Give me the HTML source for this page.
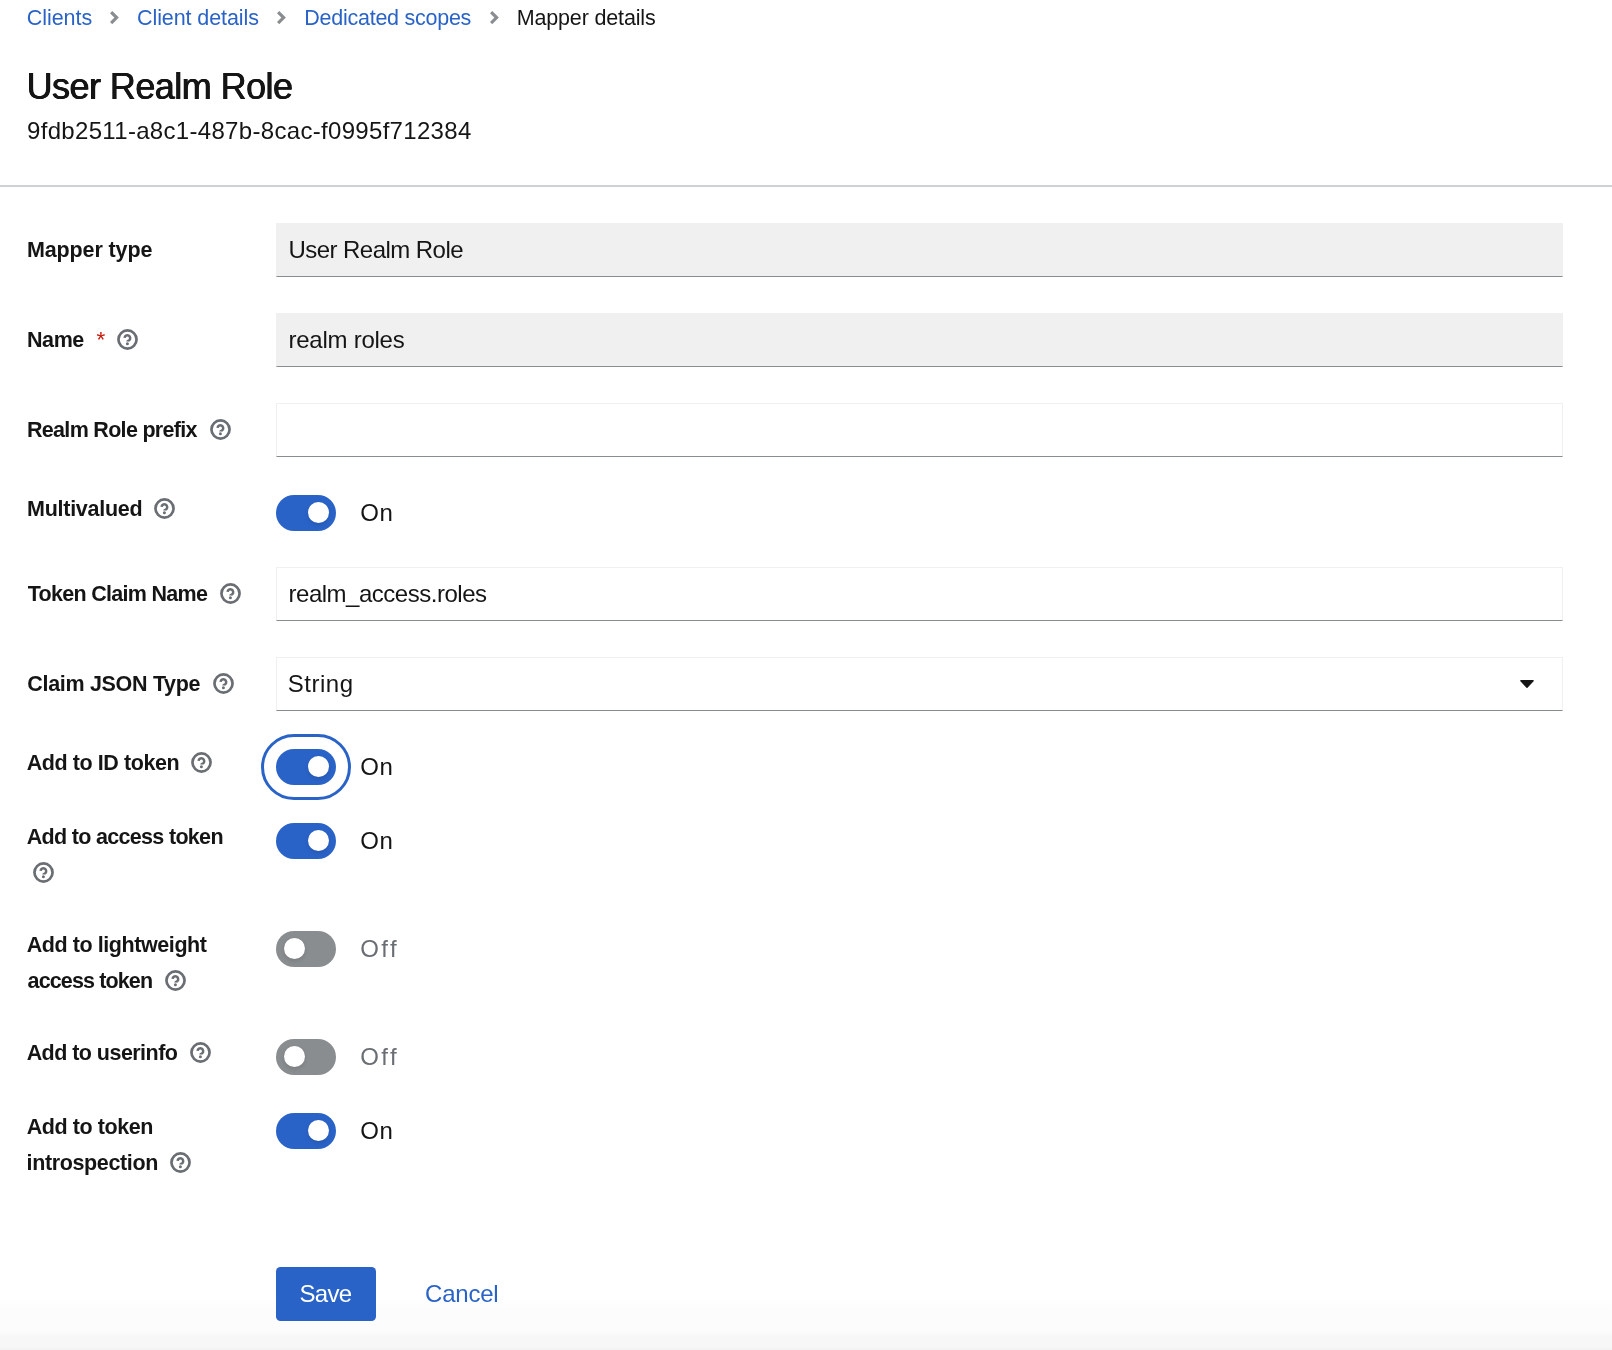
<!DOCTYPE html>
<html lang="en">
<head>
<meta charset="utf-8">
<title>Mapper details</title>
<style>
*{box-sizing:border-box;margin:0;padding:0}
html,body{width:1612px;height:1350px;overflow:hidden;background:#fff}
#page{position:absolute;left:0;top:0;width:1612px;height:1350px;will-change:transform}
body{position:relative;font-family:"Liberation Sans",Arial,sans-serif;color:#151515}
.t{position:absolute;white-space:nowrap;line-height:1;display:block;font-weight:400}
.bc{color:#2a63c7}
.bc.cur{color:#151515}
.chev{position:absolute;top:10.8px;width:9px;height:13.2px}
.h1{text-shadow:0.45px 0 0 #151515,-0.45px 0 0 #151515}
.divider{position:absolute;left:0;top:184.5px;width:1612px;height:2px;background:#d0d1d4}
.lbl{font-weight:700}
.help{position:absolute;width:21px;height:21px}
.req{color:#c9190b}
.inp{position:absolute;left:276px;width:1287px;height:54px;border:1.5px solid #f0f0f0;border-bottom:1.5px solid #8a8d90;background:#fff}
.inp.ro{background:#f0f0f0}
.sw{position:absolute;left:276px;width:60px;height:36px;border-radius:18px;background:#2a63c7}
.sw i{position:absolute;top:7px;left:31.9px;width:21.4px;height:21.4px;border-radius:50%;background:#fff;box-shadow:0 2px 4px rgba(3,3,3,.12)}
.sw.off{background:#8a8d90}
.sw.off i{left:7.7px}
.sw.focus{outline:3px solid #2a63c7;outline-offset:12px}
.swl.off{color:#6a6e73}
.btn{position:absolute;left:276px;top:1267px;width:100px;height:54px;border-radius:4.5px;background:#2a63c7}
.btnt{color:#fff}
.cancel{color:#2a63c7}
.fade{position:absolute;left:0;top:1298px;width:1612px;height:52px;background:linear-gradient(to bottom,#fff 0,#fcfcfc 13px,#fcfcfc 32px,#f7f7f7 39px,#f7f7f7 48px,#f3f3f3 52px)}
.caret{position:absolute;left:1519px;top:679px;width:16px;height:10px}
</style>
</head>
<body>
<div id="page">
<div class="fade"></div>
<nav>
<a id="bc1" class="t bc" style="left:26.85px;top:8.00px;font-size:21.5px;letter-spacing:-0.067px">Clients</a>
<svg class="chev" style="left:109.8px" viewBox="0 0 9 13.2"><path d="M1.13 1.13 6.6 6.6 1.13 12.07" fill="none" stroke="#8a8d90" stroke-width="3.2"/></svg>
<a id="bc2" class="t bc" style="left:137.05px;top:8.00px;font-size:21.5px;letter-spacing:-0.096px">Client details</a>
<svg class="chev" style="left:276.9px" viewBox="0 0 9 13.2"><path d="M1.13 1.13 6.6 6.6 1.13 12.07" fill="none" stroke="#8a8d90" stroke-width="3.2"/></svg>
<a id="bc3" class="t bc" style="left:304.25px;top:8.00px;font-size:21.5px;letter-spacing:-0.253px">Dedicated scopes</a>
<svg class="chev" style="left:489.6px" viewBox="0 0 9 13.2"><path d="M1.13 1.13 6.6 6.6 1.13 12.07" fill="none" stroke="#8a8d90" stroke-width="3.2"/></svg>
<a id="bc4" class="t bc cur" style="left:516.70px;top:8.00px;font-size:21.5px;letter-spacing:-0.154px">Mapper details</a>
</nav>
<h1 id="h1" class="t h1" style="left:26.60px;top:69.00px;font-size:36px;letter-spacing:-0.546px">User Realm Role</h1>
<span id="sub" class="t sub" style="left:27.05px;top:119.00px;font-size:24px;letter-spacing:0.314px">9fdb2511-a8c1-487b-8cac-f0995f712384</span>
<div class="divider"></div>
<form>
<label id="l1" class="t lbl" style="left:27.00px;top:240.00px;font-size:21.5px;letter-spacing:-0.130px">Mapper type</label>
<div class="inp ro" style="top:223px"></div>
<span id="v1" class="t val" style="left:288.45px;top:238.00px;font-size:24px;letter-spacing:-0.543px">User Realm Role</span>
<label id="l2" class="t lbl" style="left:27.00px;top:330.00px;font-size:21.5px;letter-spacing:-0.417px">Name</label>
<span id="req" class="t req" style="left:96.45px;top:329.00px;font-size:22.5px;letter-spacing:0.000px">*</span>
<svg class="help" style="left:117.1px;top:328.8px" viewBox="0 0 21 21"><circle cx="10.5" cy="10.5" r="9.05" fill="none" stroke="#6a6e73" stroke-width="2.7"/><path d="M7.6 8.9a2.8 2.8 0 1 1 4.6 2.35c-1 .6-1.75.8-1.75 1.15" fill="none" stroke="#6a6e73" stroke-width="2.5"/><circle cx="10.4" cy="14.7" r="1.5" fill="#6a6e73"/></svg>
<div class="inp ro" style="top:313px"></div>
<span id="v2" class="t val" style="left:288.55px;top:328.00px;font-size:24px;letter-spacing:-0.260px">realm roles</span>
<label id="l3" class="t lbl" style="left:27.00px;top:420.00px;font-size:21.5px;letter-spacing:-0.694px">Realm Role prefix</label>
<svg class="help" style="left:210.1px;top:418.9px" viewBox="0 0 21 21"><circle cx="10.5" cy="10.5" r="9.05" fill="none" stroke="#6a6e73" stroke-width="2.7"/><path d="M7.6 8.9a2.8 2.8 0 1 1 4.6 2.35c-1 .6-1.75.8-1.75 1.15" fill="none" stroke="#6a6e73" stroke-width="2.5"/><circle cx="10.4" cy="14.7" r="1.5" fill="#6a6e73"/></svg>
<div class="inp" style="top:403px"></div>
<label id="l4" class="t lbl" style="left:27.00px;top:499.00px;font-size:21.5px;letter-spacing:-0.260px">Multivalued</label>
<svg class="help" style="left:154.0px;top:497.7px" viewBox="0 0 21 21"><circle cx="10.5" cy="10.5" r="9.05" fill="none" stroke="#6a6e73" stroke-width="2.7"/><path d="M7.6 8.9a2.8 2.8 0 1 1 4.6 2.35c-1 .6-1.75.8-1.75 1.15" fill="none" stroke="#6a6e73" stroke-width="2.5"/><circle cx="10.4" cy="14.7" r="1.5" fill="#6a6e73"/></svg>
<div class="sw" style="top:495px"><i></i></div>
<span id="s4" class="t swl" style="left:360.15px;top:501.00px;font-size:24px;letter-spacing:0.750px">On</span>
<label id="l5" class="t lbl" style="left:27.65px;top:584.00px;font-size:21.5px;letter-spacing:-0.700px">Token Claim Name</label>
<svg class="help" style="left:220.0px;top:582.9px" viewBox="0 0 21 21"><circle cx="10.5" cy="10.5" r="9.05" fill="none" stroke="#6a6e73" stroke-width="2.7"/><path d="M7.6 8.9a2.8 2.8 0 1 1 4.6 2.35c-1 .6-1.75.8-1.75 1.15" fill="none" stroke="#6a6e73" stroke-width="2.5"/><circle cx="10.4" cy="14.7" r="1.5" fill="#6a6e73"/></svg>
<div class="inp" style="top:567px"></div>
<span id="v5" class="t val" style="left:288.55px;top:582.00px;font-size:24px;letter-spacing:-0.488px">realm_access.roles</span>
<label id="l6" class="t lbl" style="left:27.30px;top:674.00px;font-size:21.5px;letter-spacing:-0.314px">Claim JSON Type</label>
<svg class="help" style="left:213.0px;top:672.8px" viewBox="0 0 21 21"><circle cx="10.5" cy="10.5" r="9.05" fill="none" stroke="#6a6e73" stroke-width="2.7"/><path d="M7.6 8.9a2.8 2.8 0 1 1 4.6 2.35c-1 .6-1.75.8-1.75 1.15" fill="none" stroke="#6a6e73" stroke-width="2.5"/><circle cx="10.4" cy="14.7" r="1.5" fill="#6a6e73"/></svg>
<div class="inp" style="top:657px"></div>
<span id="v6" class="t val" style="left:287.70px;top:672.00px;font-size:24px;letter-spacing:0.530px">String</span>
<svg class="caret" viewBox="0 0 16 10"><path d="M1.9 1.8h12.2L8 8.3z" fill="#151515" stroke="#151515" stroke-width="1.4" stroke-linejoin="round"/></svg>
<label id="l7" class="t lbl" style="left:26.65px;top:753.00px;font-size:21.5px;letter-spacing:-0.411px">Add to ID token</label>
<svg class="help" style="left:191.0px;top:751.6px" viewBox="0 0 21 21"><circle cx="10.5" cy="10.5" r="9.05" fill="none" stroke="#6a6e73" stroke-width="2.7"/><path d="M7.6 8.9a2.8 2.8 0 1 1 4.6 2.35c-1 .6-1.75.8-1.75 1.15" fill="none" stroke="#6a6e73" stroke-width="2.5"/><circle cx="10.4" cy="14.7" r="1.5" fill="#6a6e73"/></svg>
<div class="sw focus" style="top:749px"><i></i></div>
<span id="s7" class="t swl" style="left:360.15px;top:755.00px;font-size:24px;letter-spacing:0.750px">On</span>
<label id="l8" class="t lbl" style="left:26.65px;top:827.00px;font-size:21.5px;letter-spacing:-0.678px">Add to access token</label>
<svg class="help" style="left:33.0px;top:861.6px" viewBox="0 0 21 21"><circle cx="10.5" cy="10.5" r="9.05" fill="none" stroke="#6a6e73" stroke-width="2.7"/><path d="M7.6 8.9a2.8 2.8 0 1 1 4.6 2.35c-1 .6-1.75.8-1.75 1.15" fill="none" stroke="#6a6e73" stroke-width="2.5"/><circle cx="10.4" cy="14.7" r="1.5" fill="#6a6e73"/></svg>
<div class="sw" style="top:823px"><i></i></div>
<span id="s8" class="t swl" style="left:360.15px;top:829.00px;font-size:24px;letter-spacing:0.750px">On</span>
<label id="l9a" class="t lbl" style="left:26.65px;top:935.00px;font-size:21.5px;letter-spacing:-0.421px">Add to lightweight</label>
<label id="l9b" class="t lbl" style="left:27.55px;top:971.00px;font-size:21.5px;letter-spacing:-0.868px">access token</label>
<svg class="help" style="left:165.0px;top:969.5px" viewBox="0 0 21 21"><circle cx="10.5" cy="10.5" r="9.05" fill="none" stroke="#6a6e73" stroke-width="2.7"/><path d="M7.6 8.9a2.8 2.8 0 1 1 4.6 2.35c-1 .6-1.75.8-1.75 1.15" fill="none" stroke="#6a6e73" stroke-width="2.5"/><circle cx="10.4" cy="14.7" r="1.5" fill="#6a6e73"/></svg>
<div class="sw off" style="top:931px"><i></i></div>
<span id="s9" class="t swl off" style="left:360.20px;top:937.00px;font-size:24px;letter-spacing:2.425px">Off</span>
<label id="l10" class="t lbl" style="left:26.65px;top:1043.00px;font-size:21.5px;letter-spacing:-0.543px">Add to userinfo</label>
<svg class="help" style="left:190.0px;top:1041.6px" viewBox="0 0 21 21"><circle cx="10.5" cy="10.5" r="9.05" fill="none" stroke="#6a6e73" stroke-width="2.7"/><path d="M7.6 8.9a2.8 2.8 0 1 1 4.6 2.35c-1 .6-1.75.8-1.75 1.15" fill="none" stroke="#6a6e73" stroke-width="2.5"/><circle cx="10.4" cy="14.7" r="1.5" fill="#6a6e73"/></svg>
<div class="sw off" style="top:1039px"><i></i></div>
<span id="s10" class="t swl off" style="left:360.20px;top:1045.00px;font-size:24px;letter-spacing:2.425px">Off</span>
<label id="l11a" class="t lbl" style="left:26.65px;top:1117.00px;font-size:21.5px;letter-spacing:-0.418px">Add to token</label>
<label id="l11b" class="t lbl" style="left:26.55px;top:1153.00px;font-size:21.5px;letter-spacing:-0.367px">introspection</label>
<svg class="help" style="left:170.0px;top:1151.5px" viewBox="0 0 21 21"><circle cx="10.5" cy="10.5" r="9.05" fill="none" stroke="#6a6e73" stroke-width="2.7"/><path d="M7.6 8.9a2.8 2.8 0 1 1 4.6 2.35c-1 .6-1.75.8-1.75 1.15" fill="none" stroke="#6a6e73" stroke-width="2.5"/><circle cx="10.4" cy="14.7" r="1.5" fill="#6a6e73"/></svg>
<div class="sw" style="top:1113px"><i></i></div>
<span id="s11" class="t swl" style="left:360.15px;top:1119.00px;font-size:24px;letter-spacing:0.750px">On</span>
<div class="btn"></div>
<span id="save" class="t btnt" style="left:299.60px;top:1282.00px;font-size:24px;letter-spacing:-0.733px">Save</span>
<a id="cancel" class="t cancel" style="left:425.10px;top:1282.00px;font-size:24px;letter-spacing:-0.230px">Cancel</a>
</form>
</div>
</body>
</html>
